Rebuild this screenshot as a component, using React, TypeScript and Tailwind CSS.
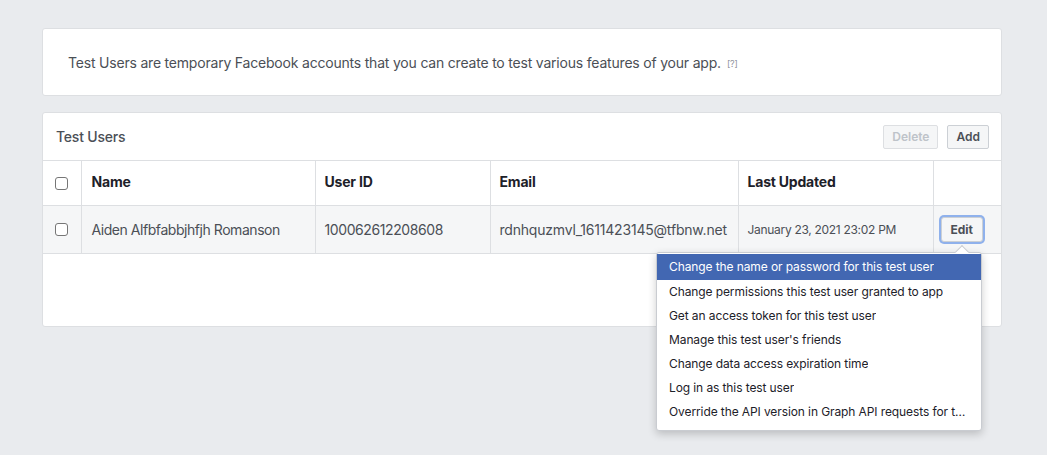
import React from 'react';

const menuItems = [
    'Change the name or password for this test user',
    'Change permissions this test user granted to app',
    'Get an access token for this test user',
    "Manage this test user's friends",
    'Change data access expiration time',
    'Log in as this test user',
    'Override the API version in Graph API requests for this test user',
];

function Checkbox() {
    return <span className="block h-[13px] w-[13px] rounded-[3px] border border-[#767676] bg-white"/>;
}

export default function App() {
    return (
        <div className="min-h-[455px] bg-[#e9ebee] pl-[42px] pt-[28px] font-['Inter','Noto_Sans',sans-serif] text-[#1d2129]">
            <div className="flex w-[960px] flex-col gap-4">
                {/* Intro */}
                <div className="flex h-[68px] items-center rounded-[3px] border border-[#dddfe2] bg-white px-[25px]">
                    <p className="text-[14px] tracking-[-0.2px] text-[#4b4f56]">
                        Test Users are temporary Facebook accounts that you can create to test various features of your app.
                        <span className="ml-[6px] align-[1px] text-[9px] text-[#90949c]">[?]</span>
                    </p>
                </div>

                {/* Test users table */}
                <div className="relative h-[215px] rounded-[3px] border border-[#dddfe2] bg-white">
                    <div className="flex h-[47px] items-center justify-between pl-[13px] pr-[12px]">
                        <span className="text-[14px] font-medium tracking-[-0.2px] text-[#4b4f56]">Test Users</span>
                        <div className="flex gap-[9px]">
                            <button className="h-[24px] rounded-[2px] border border-[#dddfe2] bg-[#f5f6f7] px-[8px] text-[12px] font-semibold text-[#bec3c9]">Delete</button>
                            <button className="h-[24px] rounded-[2px] border border-[#ccd0d5] bg-[#f5f6f7] px-[8px] text-[12px] font-semibold text-[#4b4f56]">Add</button>
                        </div>
                    </div>

                    <table className="w-full border-collapse text-left text-[14px]">
                        <thead>
                            <tr className="h-[45px] border-y border-[#dddfe2]">
                                <th className="w-[38px] pl-[12px]"><Checkbox/></th>
                                <th className="w-[234px] border-l border-[#dddfe2] pb-[3px] pl-[10px] font-bold tracking-[-0.2px] text-[#1d2129]">Name</th>
                                <th className="w-[175px] border-l border-[#dddfe2] pb-[3px] pl-[9px] font-bold tracking-[-0.2px] text-[#1d2129]">User ID</th>
                                <th className="w-[248px] border-l border-[#dddfe2] pb-[3px] pl-[9px] font-bold tracking-[-0.2px] text-[#1d2129]">Email</th>
                                <th className="w-[195px] border-l border-[#dddfe2] pb-[3px] pl-[9px] font-bold tracking-[-0.2px] text-[#1d2129]">Last Updated</th>
                                <th className="border-l border-[#dddfe2]"/>
                            </tr>
                        </thead>
                        <tbody>
                            <tr className="h-[48px] border-b border-[#dddfe2] bg-[#f5f6f7] text-[#4b4f56]">
                                <td className="pl-[12px]"><Checkbox/></td>
                                <td className="border-l border-[#dddfe2] pl-[10px] tracking-[-0.45px]">Aiden Alfbfabbjhfjh Romanson</td>
                                <td className="border-l border-[#dddfe2] pl-[9px] tracking-[-0.4px]">100062612208608</td>
                                <td className="border-l border-[#dddfe2] pl-[9px] tracking-[-0.2px]">rdnhquzmvl_1611423145@tfbnw.net</td>
                                <td className="border-l border-[#dddfe2] pl-[9px] text-[12px] tracking-[-0.3px]">January 23, 2021 23:02 PM</td>
                                <td className="border-l border-[#dddfe2] pl-[7px]">
                                    <button className="h-[25px] rounded-[3px] border border-[#ccd0d5] bg-[#f5f6f7] px-[9px] text-[12px] font-bold text-[#4b4f56] ring-2 ring-[#8fb1ec]">Edit</button>
                                </td>
                            </tr>
                        </tbody>
                    </table>

                    {/* Edit menu */}
                    <div className="absolute left-[613px] top-[139px] z-10 w-[326px] rounded-[3px] border border-[#c9ccd1] bg-white pb-[6px] pt-[1px] shadow-[0_3px_8px_rgba(0,0,0,0.2)]">
                        <span className="absolute -top-[6px] left-[300px] h-[10px] w-[10px] rotate-45 border-l border-t border-[#c9ccd1] bg-white"/>
                        {menuItems.map((item, i) => (
                            <div
                                key={item}
                                className={
                                    'relative flex h-[24px] items-center px-[12px] text-[12px] ' +
                                    (i === 0 ? 'h-[26px] bg-[#4267b2] text-white' : 'text-[#1d2129]')
                                }
                            >
                                <span className="truncate tracking-[-0.1px]">{item}</span>
                            </div>
                        ))}
                    </div>
                </div>
            </div>
        </div>
    );
}
